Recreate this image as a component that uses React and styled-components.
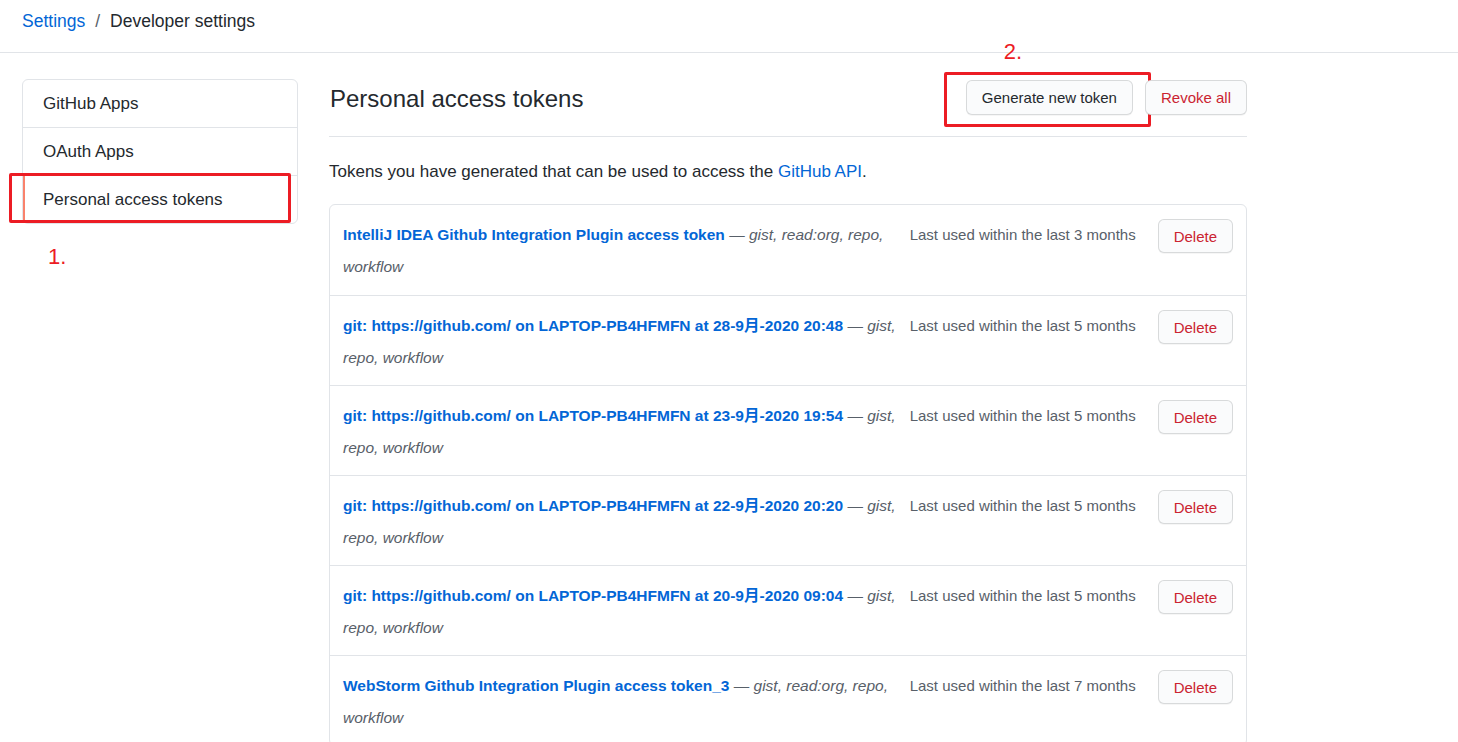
import React from 'react';
import styled, { createGlobalStyle } from 'styled-components';

const GlobalStyle = createGlobalStyle`
  body {
    margin: 0;
    background: #fff;
    font-family: "Liberation Sans", "Noto Sans CJK SC", sans-serif;
    color: #24292e;
  }
`;

const tokens = [
  { name: 'IntelliJ IDEA Github Integration Plugin access token', scopes: 'gist, read:org, repo, workflow', used: '3 months' },
  { name: 'git: https://github.com/ on LAPTOP-PB4HFMFN at 28-9月-2020 20:48', scopes: 'gist, repo, workflow', used: '5 months' },
  { name: 'git: https://github.com/ on LAPTOP-PB4HFMFN at 23-9月-2020 19:54', scopes: 'gist, repo, workflow', used: '5 months' },
  { name: 'git: https://github.com/ on LAPTOP-PB4HFMFN at 22-9月-2020 20:20', scopes: 'gist, repo, workflow', used: '5 months' },
  { name: 'git: https://github.com/ on LAPTOP-PB4HFMFN at 20-9月-2020 09:04', scopes: 'gist, repo, workflow', used: '5 months' },
  { name: 'WebStorm Github Integration Plugin access token_3', scopes: 'gist, read:org, repo, workflow', used: '7 months' },
];

const menu = ['GitHub Apps', 'OAuth Apps', 'Personal access tokens'];

const App = () => {
  return (
    <>
      <GlobalStyle />
      <Header>
        <Crumb href="#">Settings</Crumb>
        <Slash>/</Slash>
        <Current>Developer settings</Current>
      </Header>
      <Layout>
        <Sidebar>
          {menu.map((item, i) => (
            <MenuItem key={item} selected={i === 2}>
              {item}
              {i === 2 && (
                <>
                  <Marker $left={-14} $top={-3} $width={282} $height={50} />
                  <Note $left={25} $top={70}>1.</Note>
                </>
              )}
            </MenuItem>
          ))}
        </Sidebar>

        <Main>
          <TitleBar>
            <Title>Personal access tokens</Title>
            <Actions>
              <Button>
                Generate new token
                <Marker $left={-23} $top={-9} $width={207} $height={55} />
                <Note $left={37} $top={-40}>2.</Note>
              </Button>
              <Button danger>Revoke all</Button>
            </Actions>
          </TitleBar>

          <Intro>
            Tokens you have generated that can be used to access the <Link href="#">GitHub API</Link>.
          </Intro>

          <List>
            {tokens.map((t, i) => (
              <Row key={i}>
                <Description>
                  <TokenName href="#">{t.name}</TokenName> — <Scopes>{t.scopes}</Scopes>
                </Description>
                <LastUsed>Last used within the last {t.used}</LastUsed>
                <Button danger small>Delete</Button>
              </Row>
            ))}
          </List>
        </Main>
      </Layout>
    </>
  );
};

// styled components

const Header = styled.div`
  height: 53px;
  border-bottom: 1px solid #e1e4e8;
  display: flex;
  align-items: center;
  padding: 0 22px 10px;
  box-sizing: border-box;
  font-size: 17.5px;
`;

const Crumb = styled.a`
  color: #0366d6;
  text-decoration: none;
`;

const Slash = styled.span`
  color: #586069;
  margin: 0 10px;
`;

const Current = styled.span`
  color: #24292e;
`;

const Layout = styled.div`
  display: flex;
  align-items: flex-start;
  gap: 31px;
  padding: 26px 22px 0;
`;

const Sidebar = styled.nav`
  width: 276px;
  flex: none;
  border: 1px solid #e1e4e8;
  border-radius: 6px;
  box-sizing: border-box;
`;

const MenuItem = styled.div`
  position: relative;
  height: 47px;
  display: flex;
  align-items: center;
  padding-left: 20px;
  font-size: 17px;
  color: #24292e;
  border-top: 1px solid #e1e4e8;
  &:first-child {
    border-top: none;
  }
  ${p => p.selected && `
    &::before {
      content: "";
      position: absolute;
      left: 0;
      top: 0;
      bottom: 0;
      width: 2px;
      background: #f9826c;
    }
  `}
`;

const Marker = styled.span`
  position: absolute;
  left: ${p => p.$left}px;
  top: ${p => p.$top}px;
  width: ${p => p.$width}px;
  height: ${p => p.$height}px;
  border: 3px solid #ec1c24;
  border-radius: 2px;
  box-sizing: border-box;
  pointer-events: none;
`;

const Note = styled.span`
  position: absolute;
  left: ${p => p.$left}px;
  top: ${p => p.$top}px;
  color: #ec1c24;
  font-size: 22px;
  font-weight: normal;
  line-height: 1;
`;

const Main = styled.main`
  width: 918px;
  flex: none;
`;

const TitleBar = styled.div`
  display: flex;
  align-items: flex-start;
  justify-content: space-between;
  height: 58px;
  box-sizing: border-box;
  padding-top: 1px;
  border-bottom: 1px solid #e1e4e8;
`;

const Title = styled.h2`
  margin: 0;
  font-size: 24px;
  line-height: 38px;
  font-weight: normal;
  padding-left: 1px;
`;

const Actions = styled.div`
  display: flex;
  gap: 12px;
`;

const Button = styled.button`
  position: relative;
  font-family: inherit;
  font-size: 15px;
  font-weight: 500;
  height: ${p => (p.small ? 34 : 35)}px;
  padding: 0 15px;
  background: #fafbfc;
  border: 1px solid rgba(27, 31, 35, 0.15);
  border-radius: 6px;
  color: ${p => (p.danger ? '#cb2431' : '#24292e')};
  box-shadow: 0 1px 0 rgba(27, 31, 35, 0.04);
  flex: none;
`;

const Intro = styled.p`
  margin: 22px 0 19px;
  font-size: 17px;
  line-height: 26px;
`;

const Link = styled.a`
  color: #0366d6;
  text-decoration: none;
`;

const List = styled.div`
  border: 1px solid #e1e4e8;
  border-radius: 6px;
`;

const Row = styled.div`
  display: flex;
  align-items: flex-start;
  height: 90px;
  box-sizing: border-box;
  padding: 14px 13px 0 13px;
  border-top: 1px solid #e1e4e8;
  &:first-child {
    border-top: none;
  }
`;

const Description = styled.div`
  flex: 1;
  min-width: 0;
  font-size: 15.5px;
  line-height: 32px;
  color: #586069;
`;

const TokenName = styled.a`
  color: #0366d6;
  font-weight: bold;
  text-decoration: none;
`;

const Scopes = styled.em`
  color: #586069;
`;

const LastUsed = styled.span`
  flex: none;
  font-size: 15px;
  line-height: 32px;
  color: #586069;
  margin-right: 22px;
  margin-left: 2px;
`;

export default App;
